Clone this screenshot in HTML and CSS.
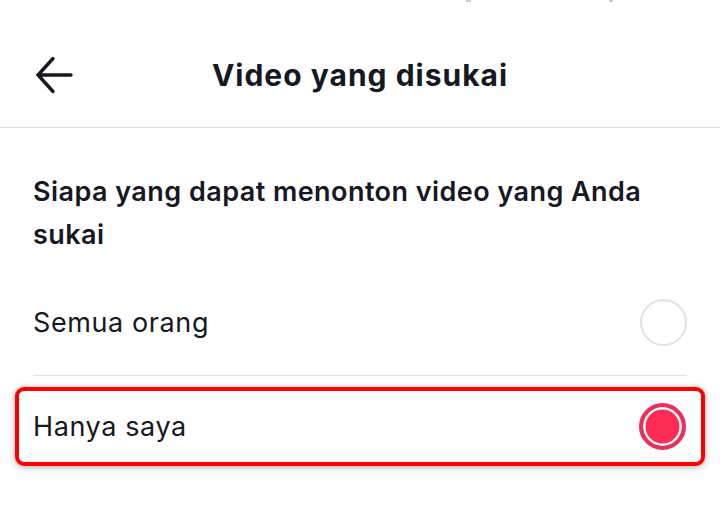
FILE: index.html
```html
<!DOCTYPE html>
<html lang="id">
<head>
<meta charset="utf-8">
<link rel="stylesheet" href="styles.css">
</head>
<body>
<div class="status"><span class="mark m1"></span><span class="mark m2"></span></div>
<header class="topbar">
  <svg class="back" width="38" height="38" viewBox="0 0 38 38" aria-hidden="true">
    <path d="M36 19 H3 M18 2.5 L3 19 L18 35.5" fill="none" stroke="#161823" stroke-width="3.4" stroke-linecap="round" stroke-linejoin="miter"/>
  </svg>
  <h1 class="title">Video yang disukai</h1>
</header>
<main class="content">
  <h2 class="question">Siapa yang dapat menonton video yang Anda sukai</h2>
  <div class="option">
    <span class="label">Semua orang</span>
    <span class="radio"></span>
  </div>
  <div class="option selected">
    <span class="label">Hanya saya</span>
    <span class="radio on"></span>
  </div>
</main>
</body>
</html>
```
FILE: styles.css
```css
* { box-sizing: border-box; }
html, body { margin: 0; padding: 0; background: #fff; }
body {
  width: 720px;
  height: 513px;
  overflow: hidden;
  font-family: "Inter", "Liberation Sans", sans-serif;
  color: #161823;
}
.status { height: 0; position: relative; }
.mark { position: absolute; top: 0; height: 2px; background: #ccc; }
.m1 { left: 466px; width: 5px; }
.m2 { left: 609px; width: 4px; }
.topbar {
  height: 128px;
  padding-top: 22px;
  border-bottom: 1px solid #dcdcdc;
  display: flex;
  align-items: center;
  justify-content: center;
  position: relative;
}
.back { position: absolute; left: 35px; top: 56px; }
.title {
  margin: 0;
  font-size: 30px;
  font-weight: 700;
  letter-spacing: 1px;
  line-height: 34px;
}
.content { padding: 0 33px; }
.question {
  margin: 0;
  padding-top: 42px;
  font-size: 27px;
  font-weight: 600;
  letter-spacing: 0.45px;
  line-height: 43px;
}
.option {
  display: flex;
  align-items: center;
  justify-content: space-between;
  height: 107px;
  border-bottom: 1px solid #e3e3e3;
  margin-top: 13px;
}
.label { font-size: 27px; font-weight: 400; letter-spacing: 0.6px; }
.radio {
  flex: none;
  width: 47px;
  height: 47px;
  border-radius: 50%;
  border: 2px solid #e1e1e1;
}
.option.selected {
  margin: 11px -18px 0;
  padding: 0 15px 0 14px;
  height: 79px;
  border: 4px solid #ff0000;
  border-radius: 9px;
  box-shadow: 0 1px 6px rgba(0,0,0,0.35);
}
.radio.on {
  border: 4px solid #ea2f59;
  background: #fe2c55;
  box-shadow: inset 0 0 0 2.5px #fff;
}
```
